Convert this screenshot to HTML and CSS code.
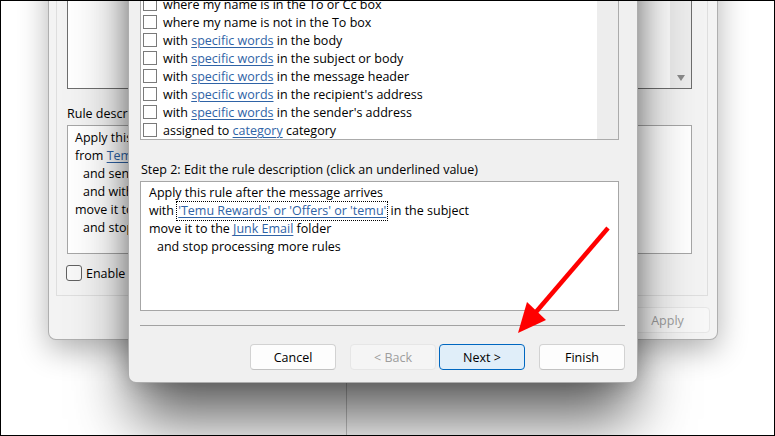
FILE: index.html
```html
<!DOCTYPE html>
<html lang="en">
<head>
<meta charset="utf-8">
<title>Rules Wizard</title>
<link rel="stylesheet" href="styles.css">
</head>
<body>
<div class="desk">
  <div class="desk-line"></div>

  <div class="dlg back">
    <div class="panel">
      <div class="listbox back-list">
        <div class="list-body"></div>
        <div class="vscroll"><span class="arrow-down"></span></div>
      </div>
      <div class="label">Rule description (click an underlined value to edit):</div>
      <div class="desc back-desc">
        <div>Apply this rule after the message arrives</div>
        <div>from <a class="lnk">Temu</a></div>
        <div class="ind">and sent only to me</div>
        <div class="ind">and with <a class="lnk">'Temu Rewards'</a> in the subject</div>
        <div>move it to the <a class="lnk">Junk Email</a> folder</div>
        <div class="ind">and stop processing more rules</div>
      </div>
      <div class="enable"><span class="cb-round"></span><span class="txt">Enable this rule</span></div>
    </div>
    <div class="btnrow">
      <button class="btn disabled">Apply</button>
    </div>
  </div>

  <div class="dlg front">
    <div class="listbox cond-list">
      <ul class="items">
        <li><span class="cb"></span><span class="txt">where my name is in the To or Cc box</span></li>
        <li><span class="cb"></span><span class="txt">where my name is not in the To box</span></li>
        <li><span class="cb"></span><span class="txt">with <a class="lnk">specific words</a> in the body</span></li>
        <li><span class="cb"></span><span class="txt">with <a class="lnk">specific words</a> in the subject or body</span></li>
        <li><span class="cb"></span><span class="txt">with <a class="lnk">specific words</a> in the message header</span></li>
        <li><span class="cb"></span><span class="txt">with <a class="lnk">specific words</a> in the recipient's address</span></li>
        <li><span class="cb"></span><span class="txt">with <a class="lnk">specific words</a> in the sender's address</span></li>
        <li><span class="cb"></span><span class="txt">assigned to <a class="lnk">category</a> category</span></li>
      </ul>
      <div class="vscroll"></div>
    </div>
    <div class="label step">Step 2: Edit the rule description (click an underlined value)</div>
    <div class="desc front-desc">
      <div>Apply this rule after the message arrives</div>
      <div>with <a class="lnk focus">'Temu Rewards' or 'Offers' or 'temu'</a> in the subject</div>
      <div>move it to the <a class="lnk">Junk Email</a> folder</div>
      <div class="ind">and stop processing more rules</div>
    </div>
    <div class="sep"></div>
    <div class="buttons">
      <button class="btn">Cancel</button>
      <button class="btn disabled gap">&lt; Back</button>
      <button class="btn primary tight">Next &gt;</button>
      <button class="btn gap">Finish</button>
    </div>
  </div>

  <svg class="arrow" viewBox="0 0 775 436" width="775" height="436" aria-hidden="true">
    <line x1="608" y1="228" x2="536" y2="312" stroke="#ff0000" stroke-width="4.5"/>
    <polygon points="518,333 546,320 527,302" fill="#ff0000"/>
  </svg>

  <div class="frame"></div>
</div>
</body>
</html>
```
FILE: styles.css
```css
* { box-sizing: border-box; }

html, body {
  margin: 0;
  padding: 0;
  background: #ffffff;
}

body {
  font-family: "Open Sans", "Noto Sans", sans-serif;
  font-size: 12.5px;
  line-height: 18px;
  color: #000;
}

.desk {
  position: relative;
  width: 775px;
  height: 436px;
  overflow: hidden;
  background: #ffffff;
}

.desk-line {
  position: absolute;
  left: 346px;
  top: 330px;
  width: 1px;
  height: 110px;
  background: rgba(0, 0, 0, 0.22);
}

.frame {
  position: absolute;
  inset: 0;
  border: 1px solid #000;
  pointer-events: none;
}

.arrow {
  position: absolute;
  left: 0;
  top: 0;
}

/* dialogs (windows on the desktop) */
.dlg {
  position: absolute;
  display: flex;
  flex-direction: column;
  justify-content: flex-end;
  border: 1px solid rgba(0, 0, 0, 0.28);
  border-radius: 0 0 8px 8px;
}

.back {
  left: 48px;
  top: -100px;
  width: 670px;
  height: 440px;
  background: #f3f3f3;
  padding: 0 9px 6px 7px;
  box-shadow: 0 10px 30px rgba(0, 0, 0, 0.3);
}

.front {
  left: 128px;
  top: -200px;
  width: 510px;
  height: 583px;
  background: #f0f0f0;
  padding: 0 12px 12px 11px;
  box-shadow: 0 42px 60px -6px rgba(0, 0, 0, 0.62), 0 0 22px rgba(0, 0, 0, 0.2);
}

.panel {
  flex: 1;
  display: flex;
  flex-direction: column;
  justify-content: flex-end;
  border: 1px solid #dedede;
  border-top: none;
  padding: 0 15px 13px 10px;
}

/* list boxes */
.listbox {
  display: flex;
  background: #fff;
}

.back-list {
  height: 150px;
  border: 1px solid #6e6e6e;
}

.list-body { flex: 1; }

.vscroll {
  width: 21px;
  background: #ededed;
  position: relative;
}

.back-list .vscroll {
  display: flex;
  align-items: flex-end;
  justify-content: center;
  padding-bottom: 7px;
}

.arrow-down {
  width: 0;
  height: 0;
  border-left: 4.5px solid transparent;
  border-right: 4.5px solid transparent;
  border-top: 6px solid #8a8a8a;
}

.cond-list {
  width: 479px;
  border: 1px solid #ababab;
}

.items {
  list-style: none;
  margin: 0;
  padding: 0 0 0 2px;
  flex: 1;
}

.items li {
  display: flex;
  align-items: flex-start;
  height: 18px;
  white-space: nowrap;
}

.txt { padding-top: 1px; }

.cb {
  width: 14px;
  height: 14px;
  margin-top: 2px;
  margin-right: 6px;
  border: 1px solid #7a7a7a;
  background: #fff;
  flex: none;
}

.lnk {
  color: #2f63a6;
  text-decoration: underline;
  text-underline-offset: 2px;
  text-decoration-thickness: 1px;
}

.focus {
  display: inline-block;
  padding: 0 1px;
  line-height: 18px;
  outline: 1px dotted #000;
  outline-offset: 0;
  vertical-align: top;
}

/* labels & description boxes */
.label {
  white-space: nowrap;
  margin-top: 16px;
  margin-bottom: 2px;
}

.step {
  margin-top: 21px;
  padding-left: 1px;
}

.desc {
  background: #fff;
  border: 1px solid #a6a6a6;
  white-space: nowrap;
  overflow: hidden;
}

.desc .ind { padding-left: 8px; }

.back-desc {
  height: 129px;
  padding: 3px 0 0 7px;
}

.front-desc {
  width: 479px;
  height: 130px;
  padding: 2px 0 0 8px;
}

.enable {
  display: flex;
  align-items: center;
  height: 18px;
  margin-top: 10px;
  margin-left: -1px;
  white-space: nowrap;
}

.cb-round {
  width: 16px;
  height: 16px;
  border: 1px solid #616161;
  border-radius: 3px;
  background: #f8f8f8;
  margin-right: 4px;
}

.sep {
  width: 485px;
  height: 1px;
  margin-top: 14px;
  background: #a2a2a2;
}

/* buttons */
.btnrow {
  display: flex;
  justify-content: flex-end;
  margin-top: 11px;
  margin-right: -2px;
}

.buttons {
  display: flex;
  justify-content: flex-end;
  margin-top: 18px;
}

.btn {
  width: 86px;
  height: 26px;
  padding: 2px 0 0;
  font: inherit;
  color: #000;
  background: #fdfdfd;
  border: 1px solid #d2d2d2;
  border-bottom-color: #c2c2c2;
  border-radius: 4px;
}

.btn.disabled {
  background: #f5f5f5;
  border-color: #e6e6e6;
  color: #9d9d9d;
}

.btn.primary {
  background: #e0eef9;
  border-color: #0067c0;
}

.back .btn { height: 26px; width: 85px; background: #f7f7f7; }

.gap { margin-left: 14px; }
.tight { margin-left: 3px; }
```
